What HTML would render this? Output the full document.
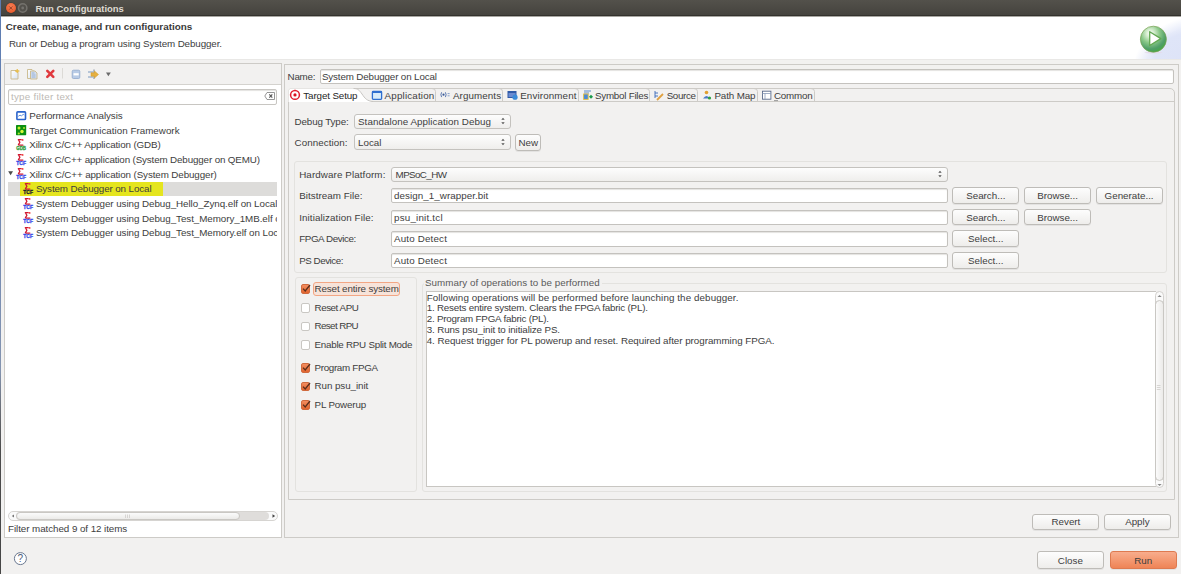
<!DOCTYPE html>
<html><head><meta charset="utf-8">
<style>
*{box-sizing:border-box;margin:0;padding:0}
html,body{width:1181px;height:574px;overflow:hidden;background:#f2f1f0;font-family:"Liberation Sans",sans-serif;font-size:9.8px;color:#3d3d3d}
.a{position:absolute}
.t{position:absolute;white-space:nowrap;line-height:12px}
.panel{background:#fff;border:1px solid #cdcbc7}
.field{position:absolute;background:#fff;border:1px solid #c4c2be;border-radius:2px;box-shadow:inset 0 1px 1px #e4e3e0}
.btn{position:absolute;border:1px solid #bebcb8;border-radius:3px;background:linear-gradient(#fdfdfd,#eeedeb);box-shadow:0 1px 0 rgba(0,0,0,0.06)}
.combo{position:absolute;border:1px solid #c4c2be;border-radius:3px;background:linear-gradient(#fdfdfd,#efeeec)}
.cb{position:absolute;width:10px;height:10px;border:1px solid #c9c7c3;border-radius:2px;background:#fff}
.cbon{background:linear-gradient(#f38d5f,#e2652f);border-color:#d06a3e}
.grp{position:absolute;border:1px solid #e3e2df;border-radius:3px}
svg{position:absolute;overflow:visible}
</style></head><body>
<div class="a" style="left:0;top:0;width:1px;height:574px;background:linear-gradient(#5c7cb2 0,#6f88b4 200px,#8494b0 370px,#6a6e76 410px,#4c4c4c 450px,#464646 574px)"></div>
<div class="a" style="left:1px;top:0;width:1180px;height:16px;background:linear-gradient(#53514b,#45433e);border-bottom:1px solid #33322d"></div>
<div class="t" style="left:35.50px;top:2.61px;font-size:9.48px;font-weight:bold;color:#dfdbd2">Run Configurations</div>
<div class="a" style="left:5.8px;top:3px;width:10px;height:10px;border-radius:50%;background:radial-gradient(circle at 50% 35%,#f77e55,#e4501f);box-shadow:0 0 0 0.5px #3a3935"></div>
<svg style="left:0;top:0" width="40" height="16"><path d="M9.2 6.4 L12.4 9.6 M12.4 6.4 L9.2 9.6" stroke="#8a3a22" stroke-width="0.9"/><circle cx="22.7" cy="8" r="4.2" fill="#53514c" stroke="#74726d" stroke-width="1.5"/><circle cx="22.7" cy="8" r="1.4" fill="#74726d"/></svg>
<div class="a" style="left:1px;top:16px;width:1180px;height:43px;background:#fff"></div>
<div class="a" style="left:1px;top:16px;width:1180px;height:1px;background:#a9a7a2"></div>
<div class="a" style="left:1100px;top:16px;width:81px;height:43px;background:radial-gradient(ellipse 44px 34px at 92px 46px,#dde3f7 0,#dfe5f8 85%,rgba(224,230,248,0) 100%),radial-gradient(ellipse 68px 58px at 100px 58px,#e6eaf9 0,#e8ecfa 82%,rgba(255,255,255,0) 100%)"></div><div class="a" style="left:1px;top:59px;width:1180px;height:1px;background:#e9e8e6"></div>
<div class="t" style="left:5.70px;top:21.37px;font-size:9.89px;font-weight:bold;color:#3a3a3a">Create, manage, and run configurations</div>
<div class="t" style="left:8.90px;top:37.60px;font-size:9.80px;letter-spacing:-0.107px">Run or Debug a program using System Debugger.</div>
<svg style="left:1138px;top:24px" width="32" height="32">
<defs><radialGradient id="rg" cx="38%" cy="28%" r="80%"><stop offset="0" stop-color="#ffffff"/><stop offset="0.18" stop-color="#d8eed2"/><stop offset="0.45" stop-color="#8ac888"/><stop offset="0.75" stop-color="#4f9e68"/><stop offset="0.92" stop-color="#48a848"/><stop offset="1" stop-color="#58c030"/></radialGradient></defs>
<ellipse cx="15.5" cy="28.6" rx="9" ry="1" fill="#e4dcec"/>
<circle cx="15.4" cy="15.2" r="13" fill="url(#rg)" stroke="#78a050" stroke-width="0.7"/>
<path d="M11.7 7.7 L11.7 21.5 L22.8 14.6 Z" fill="#fff" stroke="#62a852" stroke-width="1.3" stroke-linejoin="round"/>
</svg>
<div class="a panel" style="left:4px;top:63px;width:278px;height:475px"></div>
<div class="a" style="left:5px;top:64px;width:276px;height:20px;background:#f2f1f0"></div>
<div class="a" style="left:5px;top:84px;width:276px;height:1px;background:#d4d2ce"></div>
<svg style="left:0;top:60px" width="120" height="24">
<defs><linearGradient id="pg" x1="0" y1="0" x2="1" y2="1"><stop offset="0" stop-color="#ffffff"/><stop offset="1" stop-color="#d6e2f2"/></linearGradient></defs>
<path d="M11 10.5 H16 L18 12.5 V19 H11 Z" fill="url(#pg)" stroke="#c9b98a" stroke-width="0.9"/>
<path d="M17.2 9 L17.8 10.6 L19.4 11 L17.8 11.5 L17.2 13 L16.6 11.5 L15 11 L16.6 10.6Z" fill="#f0c040" stroke="#e0b030" stroke-width="0.5"/>
<path d="M27.5 9.5 H32 L34 11.5 V18.5 H27.5 Z" fill="url(#pg)" stroke="#c9b98a" stroke-width="0.9"/>
<path d="M30.5 11 H35 L37 13 V19 H30.5 Z" fill="#d3def0" stroke="#c9b98a" stroke-width="0.9"/>
<path d="M31.7 13 H34.5 M31.7 15 H35.5 M31.7 17 H35.5" stroke="#8aa6cc" stroke-width="0.8"/>
<path d="M47.3 10.8 L53.3 16.8 M53.3 10.8 L47.3 16.8" stroke="#e0393e" stroke-width="2.6" stroke-linecap="round"/>
<path d="M62.5 8 V18.5" stroke="#dcdad6" stroke-width="1"/>
<rect x="72.2" y="10.2" width="7.6" height="8.3" rx="1.2" fill="#b8cbe6" stroke="#8fa8cc" stroke-width="0.8"/>
<rect x="73.5" y="13.2" width="5.2" height="2.2" fill="#fff"/>
<path d="M88 12 H93 M88 17 H93" stroke="#7a9ac0" stroke-width="1.1"/>
<path d="M94 9.5 V19" stroke="#6a7a90" stroke-width="0.9"/>
<path d="M91 12.8 H94.5 V11 L98.5 14.5 L94.5 18 V16.2 H91Z" fill="#e6b040" stroke="#d09a28" stroke-width="0.5"/>
<path d="M106 12.6 H110.8 L108.4 16.2Z" fill="#6b6b6b"/>
</svg>
<div class="field" style="left:8px;top:88.5px;width:269px;height:16px;border-color:#c8c6c2"></div>
<div class="t" style="left:11.00px;top:91.10px;font-size:9.80px;letter-spacing:0.248px;color:#bdbab5">type filter text</div>
<svg style="left:264px;top:91px" width="12" height="10"><path d="M3 1.5 H10.5 V8.5 H3 L0.8 5Z" fill="#fff" stroke="#8a8a8a" stroke-width="0.9"/><path d="M5.3 3.3 L8.3 6.7 M8.3 3.3 L5.3 6.7" stroke="#555" stroke-width="1.1"/></svg>
<div class="a" style="left:8px;top:181.7px;width:269px;height:14.3px;background:#dddcda"></div>
<div class="a" style="left:20px;top:181.7px;width:143px;height:14.3px;background:#e5e51e"></div>
<div class="a" style="left:0;top:105px;width:277px;height:140px;overflow:hidden">
<div class="t" style="left:29.30px;top:5.20px;font-size:9.80px;letter-spacing:-0.073px">Performance Analysis</div>
<svg style="left:16px;top:5.80px" width="11" height="10"><rect x="0.9" y="0.9" width="8.6" height="7.6" rx="0.8" fill="#fff" stroke="#2a64cc" stroke-width="1.6"/><path d="M2.2 5.3 L4 4.2 L5.5 4.8 L7.2 3.4 L8.3 4" fill="none" stroke="#4a80d8" stroke-width="0.9"/></svg>
<div class="t" style="left:29.30px;top:19.82px;font-size:9.80px;letter-spacing:0.018px">Target Communication Framework</div>
<svg style="left:16px;top:20.12px" width="11" height="11"><rect x="0" y="0" width="10.2" height="10.2" rx="0.6" fill="#0a8f12"/><circle cx="3" cy="3" r="1.5" fill="#c8f030"/><circle cx="8" cy="3" r="1.1" fill="#a8e030"/><circle cx="6" cy="6.5" r="1.7" fill="#d8f838"/><circle cx="2.8" cy="8.5" r="1.1" fill="#b0e830"/></svg>
<div class="t" style="left:29.30px;top:34.44px;font-size:9.80px;letter-spacing:-0.127px">Xilinx C/C++ Application (GDB)</div>
<svg style="left:16.10px;top:33.24px" width="12" height="13"><path d="M2.3 1.7 H5.2 M2.6 2 L3.9 4.4 L2.4 6.6 L3.2 7.1 H6.9" fill="none" stroke="#d01830" stroke-width="1.25" stroke-linejoin="round" stroke-linecap="round"/><circle cx="6.6" cy="1.9" r="0.95" fill="#f03838"/><text x="0.3" y="11.7" font-size="4.8" font-weight="bold" fill="#2e9a3a" stroke="#2e9a3a" stroke-width="0.3" font-family="Liberation Sans" textLength="9.7" lengthAdjust="spacingAndGlyphs">GDB</text></svg>
<div class="t" style="left:29.30px;top:49.06px;font-size:9.80px;letter-spacing:-0.138px">Xilinx C/C++ application (System Debugger on QEMU)</div>
<svg style="left:16.10px;top:47.86px" width="12" height="13"><path d="M2.3 1.7 H5.2 M2.6 2 L3.9 4.4 L2.4 6.6 L3.2 7.1 H6.9" fill="none" stroke="#d01830" stroke-width="1.25" stroke-linejoin="round" stroke-linecap="round"/><circle cx="6.6" cy="1.9" r="0.95" fill="#f03838"/><text x="0.3" y="11.7" font-size="4.8" font-weight="bold" fill="#3548e8" stroke="#3548e8" stroke-width="0.3" font-family="Liberation Sans" textLength="9.7" lengthAdjust="spacingAndGlyphs">TCF</text></svg>
<div class="t" style="left:29.30px;top:63.68px;font-size:9.80px;letter-spacing:-0.101px">Xilinx C/C++ application (System Debugger)</div>
<svg style="left:16.10px;top:62.48px" width="12" height="13"><path d="M2.3 1.7 H5.2 M2.6 2 L3.9 4.4 L2.4 6.6 L3.2 7.1 H6.9" fill="none" stroke="#d01830" stroke-width="1.25" stroke-linejoin="round" stroke-linecap="round"/><circle cx="6.6" cy="1.9" r="0.95" fill="#f03838"/><text x="0.3" y="11.7" font-size="4.8" font-weight="bold" fill="#3548e8" stroke="#3548e8" stroke-width="0.3" font-family="Liberation Sans" textLength="9.7" lengthAdjust="spacingAndGlyphs">TCF</text></svg>
<div class="t" style="left:35.90px;top:78.30px;font-size:9.80px;letter-spacing:-0.109px">System Debugger on Local</div>
<svg style="left:22.70px;top:77.10px" width="12" height="13"><path d="M2.3 1.7 H5.2 M2.6 2 L3.9 4.4 L2.4 6.6 L3.2 7.1 H6.9" fill="none" stroke="#d01830" stroke-width="1.25" stroke-linejoin="round" stroke-linecap="round"/><circle cx="6.6" cy="1.9" r="0.95" fill="#f03838"/><text x="0.3" y="11.7" font-size="4.8" font-weight="bold" fill="#1a1a30" stroke="#1a1a30" stroke-width="0.3" font-family="Liberation Sans" textLength="9.7" lengthAdjust="spacingAndGlyphs">TCF</text></svg>
<div class="t" style="left:35.90px;top:92.92px;font-size:9.80px;letter-spacing:-0.051px">System Debugger using Debug_Hello_Zynq.elf on Local</div>
<svg style="left:22.70px;top:91.72px" width="12" height="13"><path d="M2.3 1.7 H5.2 M2.6 2 L3.9 4.4 L2.4 6.6 L3.2 7.1 H6.9" fill="none" stroke="#d01830" stroke-width="1.25" stroke-linejoin="round" stroke-linecap="round"/><circle cx="6.6" cy="1.9" r="0.95" fill="#f03838"/><text x="0.3" y="11.7" font-size="4.8" font-weight="bold" fill="#3548e8" stroke="#3548e8" stroke-width="0.3" font-family="Liberation Sans" textLength="9.7" lengthAdjust="spacingAndGlyphs">TCF</text></svg>
<div class="t" style="left:35.90px;top:107.54px;font-size:9.80px;letter-spacing:-0.051px">System Debugger using Debug_Test_Memory_1MB.elf on Local</div>
<svg style="left:22.70px;top:106.34px" width="12" height="13"><path d="M2.3 1.7 H5.2 M2.6 2 L3.9 4.4 L2.4 6.6 L3.2 7.1 H6.9" fill="none" stroke="#d01830" stroke-width="1.25" stroke-linejoin="round" stroke-linecap="round"/><circle cx="6.6" cy="1.9" r="0.95" fill="#f03838"/><text x="0.3" y="11.7" font-size="4.8" font-weight="bold" fill="#3548e8" stroke="#3548e8" stroke-width="0.3" font-family="Liberation Sans" textLength="9.7" lengthAdjust="spacingAndGlyphs">TCF</text></svg>
<div class="t" style="left:35.90px;top:122.16px;font-size:9.80px;letter-spacing:-0.051px">System Debugger using Debug_Test_Memory.elf on Local</div>
<svg style="left:22.70px;top:120.96px" width="12" height="13"><path d="M2.3 1.7 H5.2 M2.6 2 L3.9 4.4 L2.4 6.6 L3.2 7.1 H6.9" fill="none" stroke="#d01830" stroke-width="1.25" stroke-linejoin="round" stroke-linecap="round"/><circle cx="6.6" cy="1.9" r="0.95" fill="#f03838"/><text x="0.3" y="11.7" font-size="4.8" font-weight="bold" fill="#3548e8" stroke="#3548e8" stroke-width="0.3" font-family="Liberation Sans" textLength="9.7" lengthAdjust="spacingAndGlyphs">TCF</text></svg>
</div>
<svg style="left:8px;top:171px" width="6" height="5"><path d="M0.2 0.3 H5 L2.6 4.3Z" fill="#4a4a4a"/></svg>
<div class="a" style="left:7.5px;top:511px;width:270px;height:9.5px;border:1px solid #d6d4d1;border-radius:5px;background:#fafafa"></div>
<div class="a" style="left:16px;top:511.5px;width:252.5px;height:8.5px;background:#dfdddb;border-radius:4px"></div>
<div class="a" style="left:16px;top:511.5px;width:224px;height:8.5px;border:1px solid #c9c7c3;border-radius:4.5px;background:linear-gradient(#fbfbfb,#ecebe9)"></div>
<svg style="left:10px;top:513px" width="6" height="6"><path d="M4 1.5 L1.8 3 L4 4.5Z" fill="#777"/></svg>
<svg style="left:271px;top:513px" width="6" height="6"><path d="M1.5 1.2 L4.2 3 L1.5 4.8Z" fill="#444"/></svg>
<svg style="left:124px;top:513.5px" width="8" height="5"><path d="M1.5 0.5 V4 M3.5 0.5 V4 M5.5 0.5 V4" stroke="#cfcdca" stroke-width="0.8"/></svg>
<div class="t" style="left:8.00px;top:523.10px;font-size:9.80px;letter-spacing:-0.060px">Filter matched 9 of 12 items</div>
<svg style="left:12px;top:551px" width="16" height="16"><circle cx="8.4" cy="7.6" r="6" fill="#fff" stroke="#6a7890" stroke-width="1"/><text x="8.4" y="11.3" font-size="10" text-anchor="middle" fill="#4a5a78" font-family="Liberation Sans">?</text></svg>
<div class="a panel" style="left:284px;top:63.5px;width:895px;height:474.5px;background:#f2f1f0"></div>
<div class="t" style="left:287.60px;top:70.90px;font-size:9.80px;letter-spacing:-0.266px">Name:</div>
<div class="field" style="left:319.5px;top:68.5px;width:854.5px;height:15.5px"></div>
<div class="t" style="left:321.90px;top:70.90px;font-size:9.80px;letter-spacing:-0.135px">System Debugger on Local</div>
<div class="a" style="left:287.5px;top:88px;width:887px;height:411.5px;border:1px solid #cdcbc7;border-radius:4px 5px 0 0;background:#f2f1f0"></div>
<div class="a" style="left:288.5px;top:101px;width:885px;height:1px;background:#cdcbc7"></div>
<svg style="left:287px;top:87px" width="100" height="16">
<path d="M1.5 14 V5 Q1.5 1.5 5 1.5 H66.5 C71 1.5 72 3 75 7 C78 11.5 80 14 86 14.5 L86 15 H1.5Z" fill="#fff"/>
<path d="M66.5 1.5 C71 1.5 72 3 75 7 C78 11.5 80 14 86 14.5" fill="none" stroke="#c2c0bc" stroke-width="0.9"/>
</svg>
<div class="t" style="left:303.30px;top:90.10px;font-size:9.80px;letter-spacing:-0.117px;color:#262626">Target Setup</div>
<div class="t" style="left:384.60px;top:90.10px;font-size:9.80px;letter-spacing:0.176px">Application</div>
<svg style="left:432.4px;top:88px" width="5" height="14"><path d="M0 0.5 Q3.5 0.5 3.5 3.5 V13.5" fill="none" stroke="#cdcbc7" stroke-width="1"/></svg>
<div class="t" style="left:452.90px;top:90.10px;font-size:9.80px;letter-spacing:0.101px">Arguments</div>
<svg style="left:499.2px;top:88px" width="5" height="14"><path d="M0 0.5 Q3.5 0.5 3.5 3.5 V13.5" fill="none" stroke="#cdcbc7" stroke-width="1"/></svg>
<div class="t" style="left:520.20px;top:90.10px;font-size:9.80px;letter-spacing:0.128px">Environment</div>
<svg style="left:575px;top:88px" width="5" height="14"><path d="M0 0.5 Q3.5 0.5 3.5 3.5 V13.5" fill="none" stroke="#cdcbc7" stroke-width="1"/></svg>
<div class="t" style="left:595.00px;top:90.10px;font-size:9.80px;letter-spacing:-0.246px">Symbol Files</div>
<svg style="left:646.2px;top:88px" width="5" height="14"><path d="M0 0.5 Q3.5 0.5 3.5 3.5 V13.5" fill="none" stroke="#cdcbc7" stroke-width="1"/></svg>
<div class="t" style="left:666.70px;top:90.10px;font-size:9.80px;letter-spacing:-0.371px">Source</div>
<svg style="left:694.4px;top:88px" width="5" height="14"><path d="M0 0.5 Q3.5 0.5 3.5 3.5 V13.5" fill="none" stroke="#cdcbc7" stroke-width="1"/></svg>
<div class="t" style="left:714.40px;top:90.10px;font-size:9.80px;letter-spacing:-0.108px">Path Map</div>
<svg style="left:753.6px;top:88px" width="5" height="14"><path d="M0 0.5 Q3.5 0.5 3.5 3.5 V13.5" fill="none" stroke="#cdcbc7" stroke-width="1"/></svg>
<div class="t" style="left:773.90px;top:90.10px;font-size:9.80px;letter-spacing:-0.193px">Common</div>
<svg style="left:811.3px;top:88px" width="5" height="14"><path d="M0 0.5 Q3.5 0.5 3.5 3.5 V13.5" fill="none" stroke="#cdcbc7" stroke-width="1"/></svg>
<svg style="left:288px;top:88px" width="540" height="14">
<circle cx="7" cy="6.9" r="4.4" fill="none" stroke="#e01e2e" stroke-width="1.5"/>
<circle cx="7" cy="6.9" r="1.6" fill="#d8101e"/>
<path d="M7 1.8 V2.6 M7 11.2 V12 M1.9 6.9 H2.7 M11.3 6.9 H12.1" stroke="#e01e2e" stroke-width="1"/>
<rect x="84.4" y="3.4" width="9.2" height="8" rx="0.8" fill="#d8ecfa" stroke="#2f6fd0" stroke-width="1.3"/>
<rect x="84" y="3" width="10" height="2" fill="#2f6fd0"/>
<path d="M153.6 4.3 Q152.2 6.7 153.6 9.1 M157.4 4.3 Q158.8 6.7 157.4 9.1" fill="none" stroke="#4a6aa8" stroke-width="0.9"/>
<circle cx="155.5" cy="6.7" r="1.1" fill="#3a5a98"/>
<path d="M159.6 5.6 H161.6 M159.6 7.8 H161.6" stroke="#6a8ac0" stroke-width="0.8"/>
<rect x="219.5" y="3" width="9" height="7" fill="#2e5aa8"/>
<rect x="220.5" y="5" width="7" height="4" fill="#6a8ad0"/>
<circle cx="227" cy="9.2" r="2.6" fill="#3a8ad8"/>
<path d="M296 3 H303 M296 5 H301" stroke="#4a80c8" stroke-width="0.9"/>
<rect x="295.6" y="6" width="4.6" height="5.4" fill="#4a8ad8" stroke="#e8c040" stroke-width="0.9"/>
<path d="M301 8.7 L303 6.7 L305 8.7 L303 10.7Z" fill="#1a9a4a"/>
<path d="M367 3 V10 M367 5 H370 M367 8 H370" stroke="#3a6ab8" stroke-width="0.9"/>
<path d="M369 12 L375 6" stroke="#e0a040" stroke-width="1.8"/>
<circle cx="418.5" cy="4.5" r="1.8" fill="#e0a030"/>
<path d="M415 10.5 Q418.5 5.5 422 10.5Z" fill="#4a7ac8"/>
<circle cx="421.5" cy="10" r="1.6" fill="#2aa040"/>
<rect x="474.5" y="3.2" width="8.4" height="8" fill="#fff" stroke="#5a6a8a" stroke-width="0.9"/>
<path d="M474.5 5.5 H483 M477 5.5 V11" stroke="#8a9ab8" stroke-width="0.8"/>
<path d="M486 12.6 H490" stroke="#777" stroke-width="0.7"/>
</svg>
<div class="t" style="left:294.60px;top:116.40px;font-size:9.80px;letter-spacing:-0.130px">Debug Type:</div>
<div class="combo" style="left:354.3px;top:113.5px;width:156.5px;height:15.8px"></div>
<svg style="left:499.80px;top:116.40px" width="6" height="10"><path d="M1.3 3.8 L3 1.8 L4.7 3.8Z M1.3 6.2 L3 8.2 L4.7 6.2Z" fill="#555"/></svg>
<div class="t" style="left:358.00px;top:116.40px;font-size:9.80px;letter-spacing:0.062px">Standalone Application Debug</div>
<div class="t" style="left:294.60px;top:136.90px;font-size:9.80px;letter-spacing:0.059px">Connection:</div>
<div class="combo" style="left:354.3px;top:134.4px;width:156.5px;height:16px"></div>
<svg style="left:499.80px;top:137.40px" width="6" height="10"><path d="M1.3 3.8 L3 1.8 L4.7 3.8Z M1.3 6.2 L3 8.2 L4.7 6.2Z" fill="#555"/></svg>
<div class="t" style="left:358.00px;top:136.90px;font-size:9.80px">Local</div>
<div class="btn" style="left:515.3px;top:134.3px;width:26px;height:16.5px"></div>
<div class="t" style="left:518.40px;top:136.90px;font-size:9.80px">New</div>
<div class="grp" style="left:294.4px;top:161.3px;width:873px;height:112px"></div>
<div class="t" style="left:299.20px;top:168.80px;font-size:9.80px;letter-spacing:0.105px">Hardware Platform:</div>
<div class="combo" style="left:391px;top:167px;width:557px;height:14.6px"></div>
<svg style="left:937.00px;top:169.30px" width="6" height="10"><path d="M1.3 3.8 L3 1.8 L4.7 3.8Z M1.3 6.2 L3 8.2 L4.7 6.2Z" fill="#555"/></svg>
<div class="t" style="left:395.60px;top:168.80px;font-size:9.80px;letter-spacing:-0.600px">MPSoC_HW</div>
<div class="t" style="left:299.20px;top:189.70px;font-size:9.80px;letter-spacing:0.048px">Bitstream File:</div>
<div class="field" style="left:391px;top:187.6px;width:556.5px;height:15.6px"></div>
<div class="t" style="left:394.00px;top:189.70px;font-size:9.80px;letter-spacing:0.059px">design_1_wrapper.bit</div>
<div class="t" style="left:299.20px;top:211.60px;font-size:9.80px;letter-spacing:0.098px">Initialization File:</div>
<div class="field" style="left:391px;top:209.5px;width:556.5px;height:15.6px"></div>
<div class="t" style="left:394.00px;top:211.60px;font-size:9.80px;letter-spacing:0.209px">psu_init.tcl</div>
<div class="t" style="left:299.20px;top:233.10px;font-size:9.80px;letter-spacing:-0.414px">FPGA Device:</div>
<div class="field" style="left:391px;top:231.2px;width:556.5px;height:15.6px"></div>
<div class="t" style="left:394.00px;top:233.10px;font-size:9.80px;letter-spacing:0.168px">Auto Detect</div>
<div class="t" style="left:299.20px;top:254.60px;font-size:9.80px;letter-spacing:-0.464px">PS Device:</div>
<div class="field" style="left:391px;top:252.7px;width:556.5px;height:15.6px"></div>
<div class="t" style="left:394.00px;top:254.60px;font-size:9.80px;letter-spacing:0.168px">Auto Detect</div>
<div class="btn" style="left:952.3px;top:187.2px;width:67px;height:16.7px"></div>
<div class="t" style="left:966.18px;top:190.10px;font-size:9.80px">Search...</div>
<div class="btn" style="left:1024.1px;top:187.2px;width:67px;height:16.7px"></div>
<div class="t" style="left:1037.17px;top:190.10px;font-size:9.80px">Browse...</div>
<div class="btn" style="left:1095.6px;top:187.2px;width:67px;height:16.7px"></div>
<div class="t" style="left:1104.58px;top:190.10px;font-size:9.80px">Generate...</div>
<div class="btn" style="left:952.3px;top:208.8px;width:67px;height:16.7px"></div>
<div class="t" style="left:966.18px;top:211.70px;font-size:9.80px">Search...</div>
<div class="btn" style="left:1024.1px;top:208.8px;width:67px;height:16.7px"></div>
<div class="t" style="left:1037.17px;top:211.70px;font-size:9.80px">Browse...</div>
<div class="btn" style="left:952.3px;top:230.4px;width:67px;height:16.7px"></div>
<div class="t" style="left:968.09px;top:233.30px;font-size:9.80px">Select...</div>
<div class="btn" style="left:952.3px;top:252px;width:67px;height:16.7px"></div>
<div class="t" style="left:968.09px;top:254.90px;font-size:9.80px">Select...</div>
<div class="grp" style="left:295.2px;top:277.3px;width:122px;height:214.7px"></div>
<div class="a" style="left:313px;top:282.2px;width:87.2px;height:13.5px;border:1px solid #f2a684;border-radius:3px;background:#f7e3d9"></div>
<div class="cb cbon" style="left:300.5px;top:284.4px;width:9.8px;height:9.8px"></div>
<svg style="left:300px;top:282.4px" width="12" height="12"><path d="M3 6.6 L5.2 9 L10 3" fill="none" stroke="#5a2e1c" stroke-width="1.3"/></svg>
<div class="t" style="left:314.50px;top:282.90px;font-size:9.80px;letter-spacing:-0.123px">Reset entire system</div>
<div class="cb" style="left:300.5px;top:303.2px;width:9.8px;height:9.8px"></div>
<div class="t" style="left:314.50px;top:301.70px;font-size:9.80px;letter-spacing:-0.443px">Reset APU</div>
<div class="cb" style="left:300.5px;top:321.7px;width:9.8px;height:9.8px"></div>
<div class="t" style="left:314.50px;top:320.20px;font-size:9.80px;letter-spacing:-0.600px">Reset RPU</div>
<div class="cb" style="left:300.5px;top:340.1px;width:9.8px;height:9.8px"></div>
<div class="t" style="left:314.50px;top:338.60px;font-size:9.80px;letter-spacing:-0.248px">Enable RPU Split Mode</div>
<div class="cb cbon" style="left:300.5px;top:363.3px;width:9.8px;height:9.8px"></div>
<svg style="left:300px;top:361.3px" width="12" height="12"><path d="M3 6.6 L5.2 9 L10 3" fill="none" stroke="#5a2e1c" stroke-width="1.3"/></svg>
<div class="t" style="left:314.50px;top:361.80px;font-size:9.80px;letter-spacing:-0.317px">Program FPGA</div>
<div class="cb cbon" style="left:300.5px;top:381.7px;width:9.8px;height:9.8px"></div>
<svg style="left:300px;top:379.7px" width="12" height="12"><path d="M3 6.6 L5.2 9 L10 3" fill="none" stroke="#5a2e1c" stroke-width="1.3"/></svg>
<div class="t" style="left:314.50px;top:380.20px;font-size:9.80px;letter-spacing:-0.062px">Run psu_init</div>
<div class="cb cbon" style="left:300.5px;top:400px;width:9.8px;height:9.8px"></div>
<svg style="left:300px;top:398px" width="12" height="12"><path d="M3 6.6 L5.2 9 L10 3" fill="none" stroke="#5a2e1c" stroke-width="1.3"/></svg>
<div class="t" style="left:314.50px;top:398.50px;font-size:9.80px;letter-spacing:-0.147px">PL Powerup</div>
<div class="grp" style="left:422.4px;top:283px;width:745px;height:209px"></div>
<div class="a" style="left:424px;top:279px;width:178px;height:8px;background:#f2f1f0"></div>
<div class="t" style="left:425.00px;top:277.30px;font-size:9.80px;letter-spacing:0.041px;color:#5a5a5a">Summary of operations to be performed</div>
<div class="a" style="left:425.5px;top:291.4px;width:730px;height:196px;background:#fff;border:1px solid #c8c6c2;border-right:none"></div>
<div class="t" style="left:426.70px;top:291.60px;font-size:9.80px;letter-spacing:0.099px">Following operations will be performed before launching the debugger.</div>
<div class="t" style="left:426.70px;top:302.30px;font-size:9.80px;letter-spacing:-0.206px">1. Resets entire system. Clears the FPGA fabric (PL).</div>
<div class="t" style="left:426.70px;top:313.00px;font-size:9.80px;letter-spacing:-0.207px">2. Program FPGA fabric (PL).</div>
<div class="t" style="left:426.70px;top:323.80px;font-size:9.80px;letter-spacing:-0.117px">3. Runs psu_init to initialize PS.</div>
<div class="t" style="left:426.70px;top:334.60px;font-size:9.80px;letter-spacing:-0.033px">4. Request trigger for PL powerup and reset. Required after programming FPGA.</div>
<div class="a" style="left:1154.6px;top:291.3px;width:9.2px;height:196.4px;border:1px solid #d2d0cd;border-radius:5px;background:#fafafa"></div>
<div class="a" style="left:1154.6px;top:299.8px;width:9.2px;height:181px;border:1px solid #c9c7c3;border-radius:4.6px;background:linear-gradient(90deg,#fbfbfb,#ecebe9)"></div>
<svg style="left:1155px;top:293px" width="9" height="6"><path d="M2.5 4 L4.6 2 L6.7 4Z" fill="#888"/></svg>
<svg style="left:1156px;top:384px" width="6" height="8"><path d="M0.8 1.5 H4.5 M0.8 3.5 H4.5 M0.8 5.5 H4.5" stroke="#cfcdca" stroke-width="0.8"/></svg>
<svg style="left:1155px;top:482px" width="9" height="6"><path d="M2.5 2 L4.6 4 L6.7 2Z" fill="#888"/></svg>
<div class="btn" style="left:1032.3px;top:513.5px;width:67.2px;height:16.5px"></div>
<div class="t" style="left:1051.47px;top:516.45px;font-size:9.80px">Revert</div>
<div class="btn" style="left:1103.9px;top:513.5px;width:67px;height:16.5px"></div>
<div class="t" style="left:1125.14px;top:516.45px;font-size:9.80px">Apply</div>
<div class="btn" style="left:1036.9px;top:551.3px;width:67px;height:17.3px"></div>
<div class="t" style="left:1057.87px;top:554.65px;font-size:9.80px">Close</div>
<div class="btn" style="left:1109.8px;top:551.3px;width:67px;height:17.3px;background:linear-gradient(#f8ad8d,#ef8456);border-color:#de7a50"></div>
<div class="t" style="left:1134.30px;top:554.65px;font-size:9.80px">Run</div>
</body></html>
